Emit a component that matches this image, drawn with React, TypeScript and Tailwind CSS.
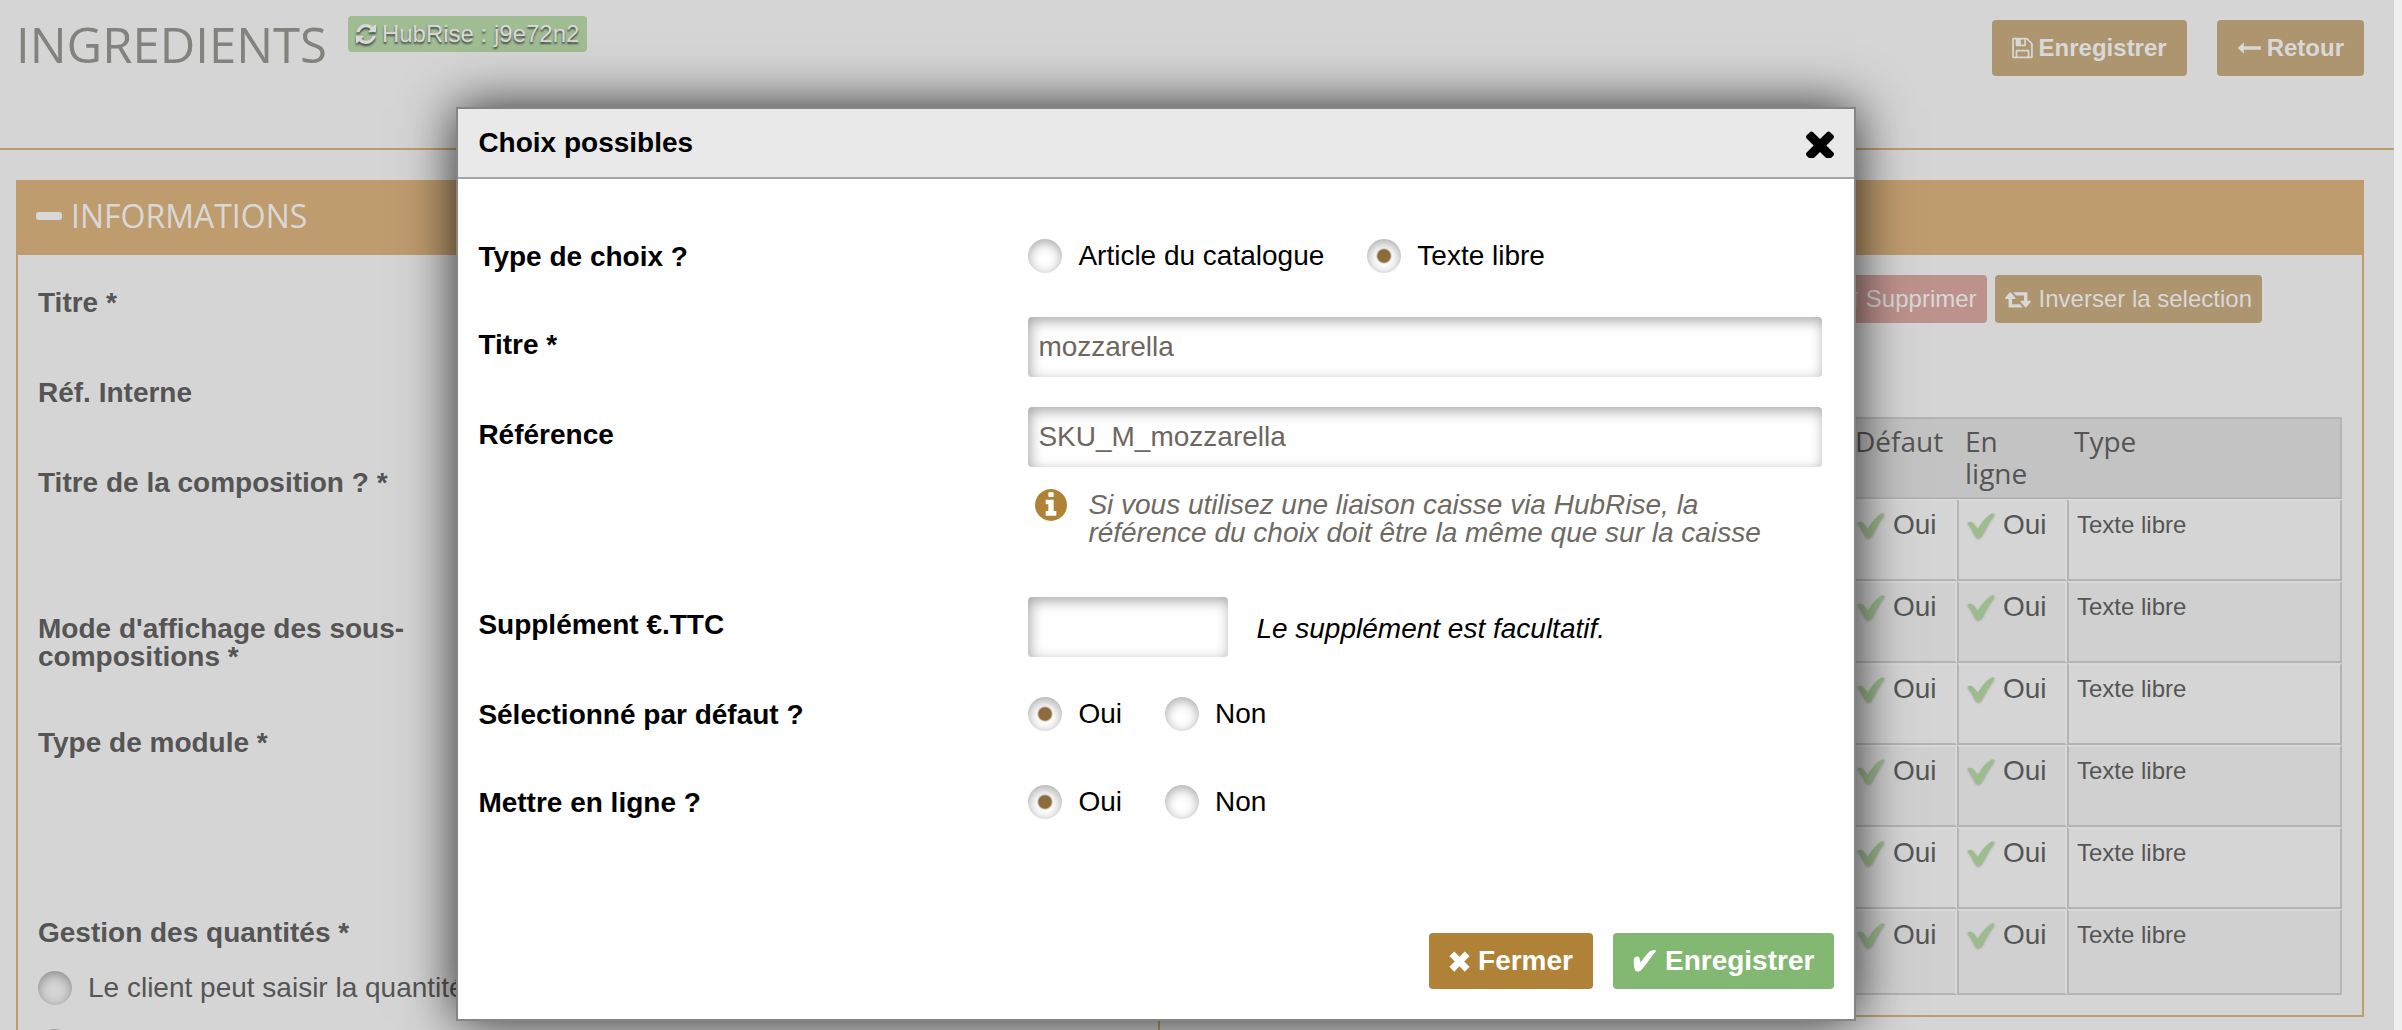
import type { ComponentProps, ReactNode } from "react";

interface IconProps {
  viewBox: string;
  d: string;
  className?: string;
}

interface FieldRowProps {
  label: string;
  htmlFor?: string;
  kind?: "input" | "radio";
  children: ReactNode;
}

const ICONS = {
  refresh: {
    viewBox: "128 0 1536 1792",
    d: "M1639 1056q0 5-1 7-64 268-268 434.5t-478 166.5q-146 0-282.5-55t-243.5-157l-129 129q-19 19-45 19t-45-19-19-45v-448q0-26 19-45t45-19h448q26 0 45 19t19 45-19 45l-137 137q71 66 161 102t187 36q134 0 250-65t186-179q11-17 53-117 8-23 30-23h192q13 0 22.5 9.5t9.5 22.5zm25-800v448q0 26-19 45t-45 19h-448q-26 0-45-19t-19-45 19-45l138-138q-148-137-349-137-134 0-250 65t-186 179q-11 17-53 117-8 23-30 23h-199q-13 0-22.5-9.5t-9.5-22.5v-7q65-268 270-434.5t480-166.5q146 0 284 55.5t245 156.5l130-129q19-19 45-19t45 19 19 45z",
  },
  save: {
    viewBox: "0 0 1536 1792",
    d: "M384 1536h768v-384h-768v384zm896 0h128v-896q0-14-10-38.5t-20-34.5l-281-281q-10-10-34-20t-39-10v416q0 40-28 68t-68 28h-576q-40 0-68-28t-28-68v-416h-128v1280h128v-416q0-40 28-68t68-28h832q40 0 68 28t28 68v416zm-384-928v-320q0-13-9.5-22.5t-22.5-9.5h-192q-13 0-22.5 9.5t-9.5 22.5v320q0 13 9.5 22.5t22.5 9.5h192q13 0 22.5-9.5t9.5-22.5zm640 32v928q0 40-28 68t-68 28h-1344q-40 0-68-28t-28-68v-1344q0-40 28-68t68-28h928q40 0 88 20t76 48l280 280q28 28 48 76t20 88z",
  },
  back: {
    viewBox: "0 0 1792 1792",
    d: "M1792 800v192q0 14-9 23t-23 9h-1248v224q0 21-19 29t-35-5l-384-350q-10-10-10-23 0-14 10-24l384-354q16-14 35-6 19 9 19 29v224h1248q14 0 23 9t9 23z",
  },
  trash: {
    viewBox: "192 0 1408 1792",
    d: "M704 736v576q0 14-9 23t-23 9h-64q-14 0-23-9t-9-23v-576q0-14 9-23t23-9h64q14 0 23 9t9 23zm256 0v576q0 14-9 23t-23 9h-64q-14 0-23-9t-9-23v-576q0-14 9-23t23-9h64q14 0 23 9t9 23zm256 0v576q0 14-9 23t-23 9h-64q-14 0-23-9t-9-23v-576q0-14 9-23t23-9h64q14 0 23 9t9 23zm128 724v-948h-896v948q0 22 7 40.5t14.5 27 10.5 8.5h832q3 0 10.5-8.5t14.5-27 7-40.5zm-672-1076h448l-48-117q-7-9-17-11h-317q-10 2-17 11zm928 32v64q0 14-9 23t-23 9h-96v948q0 83-47 143.5t-113 60.5h-832q-66 0-113-58.5t-47-141.5v-952h-96q-14 0-23-9t-9-23v-64q0-14 9-23t23-9h309l70-167q15-37 54-63t79-26h320q40 0 79 26t54 63l70 167h309q14 0 23 9t9 23z",
  },
  retweet: {
    viewBox: "0 0 1920 1792",
    d: "M1280 1504q0 13-9.5 22.5t-22.5 9.5h-960q-8 0-13.5-2t-9-7-5.5-8-3-11.5-1-11.5v-600h-192q-26 0-45-19t-19-45q0-24 15-41l320-384q19-22 49-22t49 22l320 384q15 17 15 41 0 26-19 45t-45 19h-192v384h576q16 0 25 11l160 192q7 10 7 21zm640-416q0 24-15 41l-320 384q-20 23-49 23t-49-23l-320-384q-15-17-15-41 0-26 19-45t45-19h192v-384h-576q-16 0-25-12l-160-192q-7-9-7-20 0-13 9.5-22.5t22.5-9.5h960q8 0 13.5 2t9 7 5.5 8 3 11.5 1 11.5v600h192q26 0 45 19t19 45z",
  },
  info: {
    viewBox: "128 128 1536 1536",
    d: "M1152 1376v-160q0-14-9-23t-23-9h-96v-512q0-14-9-23t-23-9h-320q-14 0-23 9t-9 23v160q0 14 9 23t23 9h96v320h-96q-14 0-23 9t-9 23v160q0 14 9 23t23 9h448q14 0 23-9t9-23zm-128-896v-160q0-14-9-23t-23-9h-192q-14 0-23 9t-9 23v160q0 14 9 23t23 9h192q14 0 23-9t9-23zm640 416q0 209-103 385.5t-279.5 279.5-385.5 103-385.5-103-279.5-279.5-103-385.5 103-385.5 279.5-279.5 385.5-103 385.5 103 279.5 279.5 103 385.5z",
  },
  // Rounded cross of the title bar
  close: {
    viewBox: "302 302 1188 1188",
    d: "M1490 1322q0 40-28 68l-136 136q-28 28-68 28t-68-28l-294-294-294 294q-28 28-68 28t-68-28l-136-136q-28-28-28-68t28-68l294-294-294-294q-28-28-28-68t28-68l136-136q28-28 68-28t68 28l294 294 294-294q28-28 68-28t68 28l136 136q28 28 28 68t-28 68l-294 294 294 294q28 28 28 68z",
  },
  // Heavy multiplication sign, square cut ends
  cross: {
    viewBox: "0 0 28 28",
    d: "M7 0.5 14 7.8 21 0.5 27.5 7 20.3 14 27.5 21 21 27.5 14 20.2 7 27.5 0.5 21 7.7 14 0.5 7Z",
  },
  // Brush-like check mark used in buttons
  heavyCheck: {
    viewBox: "0 0 24 24",
    d: "M23.4 1.6C18 8.6 13.5 14.8 8.6 20.8C7 22.8 3.4 23.4 2.2 21.2C0.8 18.6 0.6 14 0.8 10.6C1 7.6 5.4 6.4 6.4 8.8C7 10.4 7.2 12 7.6 13.8C10.8 9 13.6 5.4 16.6 2.6C18.6 0.9 21 1.1 23.4 1.6Z",
  },
  tick: {
    viewBox: "0 0 28 26",
    d: "M0.3 9.8C2 8.6 4 8.2 5.4 9.4C7.6 11.2 9 13.4 11 15.8C14.6 9.8 18.8 4 24 0.9C25.4 0.3 27 0.4 27.7 1.4C23 7.4 19.4 14 15.8 21C14.6 23.4 13.4 25 11.4 24.9C9.4 24.8 8.6 23.6 7.8 22C5.8 18 3.6 13.6 0.3 9.8Z",
  },
};

const LEFT_FIELDS = [
  { label: "Titre *", className: "h-[90px]" },
  { label: "Réf. Interne", className: "h-[90px]" },
  { label: "Titre de la composition ? *", className: "h-[146px]" },
  { label: "Mode d'affichage des sous-compositions *", className: "h-[114px]" },
  { label: "Type de module *", className: "h-[190px]" },
  { label: "Gestion des quantités *", className: "h-[52px]" },
];

const ROWS = [1, 2, 3, 4, 5, 6];

function Icon({ viewBox, d, className }: IconProps) {
  return (
    <svg viewBox={viewBox} className={className} fill="currentColor" aria-hidden="true">
      <path d={d} />
    </svg>
  );
}

function Radio({ label, ...props }: ComponentProps<"input"> & { label: string }) {
  return (
    <label className="flex items-center gap-4 whitespace-nowrap leading-7">
      <input
        type="radio"
        className="h-[34px] w-[34px] shrink-0 appearance-none rounded-full shadow-[inset_0_3px_12px_rgba(0,0,0,0.35)] checked:bg-[radial-gradient(circle,#8f6c3c_6px,transparent_8px)]"
        {...props}
      />
      {label}
    </label>
  );
}

function TextInput({ className = "w-full", ...props }: ComponentProps<"input">) {
  return (
    <input
      type="text"
      className={`${className} h-[60px] rounded bg-white px-[10px] text-[28px] text-[#6e665e] shadow-[inset_2px_4px_14px_rgba(0,0,0,0.35)] outline-none`}
      {...props}
    />
  );
}

function FieldRow({ label, htmlFor, kind = "input", children }: FieldRowProps) {
  const isRadio = kind === "radio";
  const Label = isRadio ? "span" : "label";
  return (
    <div
      role={isRadio ? "radiogroup" : undefined}
      aria-label={isRadio ? label : undefined}
      className={`grid grid-cols-[550px_1fr] ${isRadio ? "pt-[25px] pb-[29px]" : "py-[15px]"}`}
    >
      <Label htmlFor={htmlFor} className={`font-bold leading-7 ${isRadio ? "pt-1" : "pt-[14px]"}`}>
        {label}
      </Label>
      <div>{children}</div>
    </div>
  );
}

function YesCell() {
  return (
    <td className="border-t-2 border-r-2 border-b-2 border-l-2 border-t-[#d8d8d8] border-r-[#d8d8d8] border-b-[#b4b4b4] border-l-[#b4b4b4] pt-3 pl-2 align-top">
      <span className="flex gap-2">
        <Icon {...ICONS.tick} className="h-[26px] w-[28px] text-[#9bbd8c] drop-shadow-[0_1px_1px_rgba(0,0,0,0.25)]" />
        <span className="leading-6">Oui</span>
      </span>
    </td>
  );
}

function Page() {
  return (
    <div className="mr-2 h-full overflow-hidden bg-[#d5d5d5] text-[#555]">
      <header className="flex h-[150px] items-start border-b-2 border-[#bf9c6e] pr-[30px] pl-4">
        <h1 className="mt-5 font-['Open_Sans',sans-serif] text-[49px] leading-none text-[#82827f]">
          INGREDIENTS
        </h1>
        <span className="mt-4 ml-[21px] flex h-9 items-center gap-[6px] rounded bg-[#9fbc92] px-2 text-2xl leading-none text-[#d8d8d8] [text-shadow:0_2px_2px_#444]">
          <Icon {...ICONS.refresh} className="h-6 w-[20px] drop-shadow-[0_2px_1px_#444]" />
          HubRise : j9e72n2
        </span>
        <div className="mt-5 ml-auto flex gap-[30px] text-2xl font-bold text-[#d8d8d8]">
          <button type="button" className="flex h-14 items-center gap-[6px] rounded bg-[#ad956f] px-5">
            <Icon {...ICONS.save} className="h-6 w-[21px]" />
            Enregistrer
          </button>
          <button type="button" className="flex h-14 items-center gap-[6px] rounded bg-[#ad956f] px-5">
            <Icon {...ICONS.back} className="h-6 w-6" />
            Retour
          </button>
        </div>
      </header>

      <main className="mt-[30px] mr-[30px] ml-4">
        <h2 className="flex h-[75px] items-center gap-[9px] bg-[#bf9c6e] px-5 pb-[3px] font-['Open_Sans',sans-serif] text-[32px] text-[#d8d8d8]">
          <span className="h-2 w-[26px] rounded-[3px] bg-[#d8d8d8]" />
          INFORMATIONS
        </h2>
        <div className="flex items-start">
          {/* Form column, runs past the fold */}
          <section className="w-[1144px] shrink-0 border-x-2 border-[#bf9c6e] pt-[34px] pl-5">
            {LEFT_FIELDS.map((field) => (
              <div key={field.label} className={`w-[380px] font-bold leading-7 ${field.className}`}>
                {field.label}
              </div>
            ))}
            <div className="flex flex-col gap-6 pb-20">
              <Radio name="quantites" label="Le client peut saisir la quantité" />
              <Radio name="quantites" label="" aria-label="Quantité fixe" />
            </div>
          </section>

          {/* Choices column */}
          <section className="flex-1 border-r-2 border-b-2 border-[#bf9c6e] pt-5 pr-5 pb-5">
            <div className="mr-20 flex justify-end gap-2 text-2xl text-[#d8d8d8]">
              <button type="button" className="flex h-12 items-center gap-2 rounded bg-[#be928c] px-[10px]">
                <Icon {...ICONS.trash} className="h-6 w-[19px]" />
                Supprimer
              </button>
              <button type="button" className="flex h-12 items-center gap-2 rounded bg-[#ad956f] px-[10px]">
                <Icon {...ICONS.retweet} className="h-6 w-[26px]" />
                Inverser la selection
              </button>
            </div>
            <table className="mt-[94px] ml-auto w-[495px] table-fixed border-separate border-spacing-0">
              <thead>
                <tr className="h-[82px] bg-[#c3c3c3] text-left font-['Open_Sans',sans-serif] leading-8">
                  <th className="w-[110px] border-y-2 border-[#b4b4b4] pt-[6px] pl-2 align-top font-normal">Défaut</th>
                  <th className="w-[110px] border-y-2 border-[#b4b4b4] pt-[6px] pr-6 pl-2 align-top font-normal">En ligne</th>
                  <th className="border-y-2 border-r-2 border-[#b4b4b4] pt-[6px] pl-[7px] align-top font-normal">Type</th>
                </tr>
              </thead>
              <tbody>
                {ROWS.map((row) => (
                  <tr key={row} className="h-[82px] last:h-[86px] even:bg-[#d0d0d0]">
                    <YesCell />
                    <YesCell />
                    <td className="border-2 border-[#b4b4b4] border-t-[#d8d8d8] pt-3 pl-2 align-top text-2xl leading-6">
                      Texte libre
                    </td>
                  </tr>
                ))}
              </tbody>
            </table>
          </section>
        </div>
      </main>
    </div>
  );
}

function ChoiceDialog() {
  return (
    <div
      role="dialog"
      aria-modal="true"
      aria-labelledby="dialog-title"
      className="absolute top-[107px] left-[19%] w-full max-w-[1400px] border-2 border-[#858585] bg-white text-black shadow-[0_0_50px_rgba(0,0,0,0.8)]"
    >
      <div className="flex h-[70px] items-center justify-between border-b-2 border-[#a5a5a5] bg-[#e9e9e9] px-5">
        <h2 id="dialog-title" className="font-bold leading-7">
          Choix possibles
        </h2>
        <button type="button" aria-label="Fermer la fenêtre">
          <Icon {...ICONS.close} className="mt-px h-7 w-7" />
        </button>
      </div>

      <form className="pt-[35px] pr-8 pl-5">
        <FieldRow label="Type de choix ?" kind="radio">
          <div className="flex gap-[43px]">
            <Radio name="type" label="Article du catalogue" />
            <Radio name="type" label="Texte libre" defaultChecked />
          </div>
        </FieldRow>
        <FieldRow label="Titre *" htmlFor="titre">
          <TextInput id="titre" defaultValue="mozzarella" />
        </FieldRow>
        <FieldRow label="Référence" htmlFor="reference">
          <TextInput id="reference" defaultValue="SKU_M_mozzarella" />
          <div className="mt-[22px] mb-[20px] flex gap-[21px] pl-[7px] text-[#6e6a63]">
            <Icon {...ICONS.info} className="h-8 w-8 shrink-0 text-[#b08237]" />
            <p className="pt-[2px] italic leading-7">
              Si vous utilisez une liaison caisse via HubRise, la référence du choix doit être la même que sur la caisse
            </p>
          </div>
        </FieldRow>
        <FieldRow label="Supplément €.TTC" htmlFor="supplement">
          <div className="flex items-center gap-7">
            <TextInput id="supplement" className="w-[200px]" />
            <span className="pt-[3px] italic">Le supplément est facultatif.</span>
          </div>
        </FieldRow>
        <FieldRow label="Sélectionné par défaut ?" kind="radio">
          <div className="flex gap-[43px]">
            <Radio name="defaut" label="Oui" defaultChecked />
            <Radio name="defaut" label="Non" />
          </div>
        </FieldRow>
        <FieldRow label="Mettre en ligne ?" kind="radio">
          <div className="flex gap-[43px]">
            <Radio name="en-ligne" label="Oui" defaultChecked />
            <Radio name="en-ligne" label="Non" />
          </div>
        </FieldRow>
      </form>

      <div className="flex justify-end gap-5 px-5 pt-[85px] pb-[30px] font-bold text-white">
        <button type="button" className="flex h-14 items-center gap-2 rounded bg-[#b08237] px-5">
          <Icon {...ICONS.cross} className="h-[21px] w-[21px]" />
          Fermer
        </button>
        <button type="button" className="flex h-14 items-center gap-2 rounded bg-[#82b872] px-5">
          <Icon {...ICONS.heavyCheck} className="h-6 w-6" />
          Enregistrer
        </button>
      </div>
    </div>
  );
}

export default function App() {
  return (
    <div className="relative h-screen overflow-hidden bg-[#efefef] font-['Liberation_Sans',Arial,sans-serif] text-[28px] leading-8">
      <Page />
      <ChoiceDialog />
    </div>
  );
}
